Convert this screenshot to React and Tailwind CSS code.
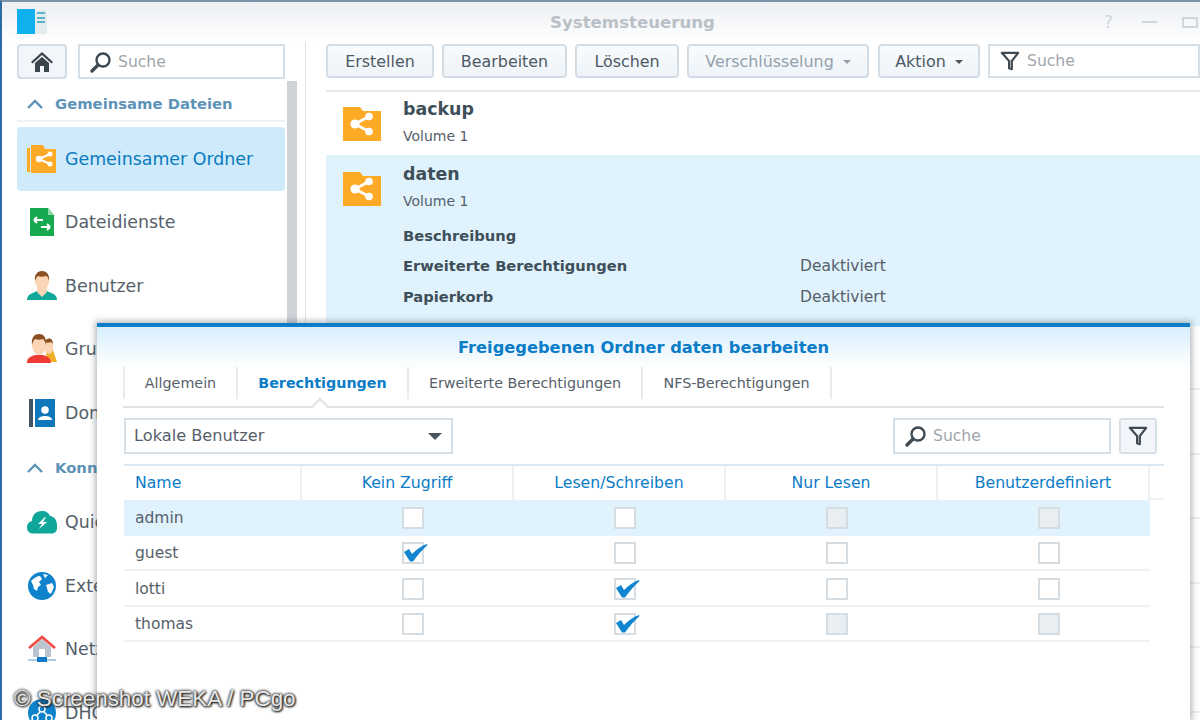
import React from 'react'

const FolderIcon = () => (
  <svg viewBox="0 0 38 36" className="w-[38px] h-[36px]">
    <path d="M0 2h17l3 4h18v30H0z" fill="#fdab27" />
    <g stroke="#fff" strokeWidth="2.6">
      <path d="M12 19l13-7M12 19l13 7" />
    </g>
    <circle cx="12" cy="19" r="4.6" fill="#fff" />
    <circle cx="26" cy="11.5" r="3.8" fill="#fff" />
    <circle cx="26" cy="26.5" r="3.8" fill="#fff" />
  </svg>
)

const SidebarFolder = () => (
  <svg viewBox="0 0 30 28" className="w-[30px] h-[28px]">
    <path d="M0 3h3v24H0z" fill="#fdab27" />
    <path d="M4 0h12l2 4h11v24H4z" fill="#fdab27" />
    <path d="M12 14l11-5M12 14l11 5" stroke="#fff" strokeWidth="2" />
    <circle cx="12" cy="14" r="3.2" fill="#fff" />
    <circle cx="23" cy="9" r="2.5" fill="#fff" />
    <circle cx="23" cy="19" r="2.5" fill="#fff" />
  </svg>
)

const FileServiceIcon = () => (
  <svg viewBox="0 0 26 28" className="w-[26px] h-[28px]">
    <path d="M1 0h18l6 7v21H1z" fill="#16a950" />
    <path d="M19 0v7h6z" fill="#8fd8a8" />
    <path d="M5 12h9M5 12l3-3M5 12l3 3M21 19h-9M21 19l-3-3M21 19l-3 3" stroke="#fff" strokeWidth="2" fill="none" />
  </svg>
)

const UserIcon = () => (
  <svg viewBox="0 0 30 30" className="w-[30px] h-[30px]">
    <path d="M0 29c0-6 6-7 10-9h10c4 2 10 3 10 9z" fill="#12a89a" />
    <path d="M10 15h10v6l-5 5-5-5z" fill="#fbd5b5" />
    <ellipse cx="15" cy="10" rx="7" ry="9" fill="#fbd5b5" />
    <path d="M8 10C7 3 11 0 15 0s8 3 7 10c-1-4-2-5-3-5-3 1-6 1-8 0-1 1-2 2-3 5z" fill="#8a4f22" />
  </svg>
)

const GroupIcon = () => (
  <svg viewBox="0 0 30 30" className="w-[30px] h-[30px]">
    <path d="M18 8c5-3 9 0 8 8l4 12H20z" fill="#f1b02a" />
    <ellipse cx="22" cy="13" rx="4" ry="7" fill="#fbd5b5" />
    <path d="M18 8c1-5 8-5 8 2l-2-2c-2 1-4 1-6 0z" fill="#8a4f22" />
    <path d="M0 29c0-6 5-7 8-8h8c3 1 8 2 8 8z" fill="#ee3b36" />
    <ellipse cx="12" cy="11" rx="7" ry="10" fill="#fbd5b5" />
    <path d="M5 11C4 3 8 0 12 0s8 3 7 11c-1-4-2-5-3-6-3 1-5 1-8 0-1 1-2 2-3 6z" fill="#8a4f22" />
  </svg>
)

const DomainIcon = () => (
  <svg viewBox="0 0 26 28" className="w-[26px] h-[28px]">
    <path d="M0 0h4v28H0z" fill="#3f5666" />
    <path d="M6 0h20v28H6z" fill="#0f78bd" />
    <circle cx="16" cy="11" r="3.8" fill="#fff" />
    <path d="M9 21c0-3 4-4 7-4s7 1 7 4z" fill="#fff" />
  </svg>
)

const CloudIcon = () => (
  <svg viewBox="0 0 30 24" className="w-[30px] h-[24px]">
    <path d="M6 23.500C2 23.500 0 21 0 17.500 0 14 2 11.500 5 11c0-6 4-10 10-10 4 0 7 2 8 5 4 .5 7 4 7 9v3c0 3-2 5.500-5 5.500z" fill="#10a79b" />
    <path d="M18 7l-7 7h4l-3 5 8-7h-4l3-5z" fill="#fff" />
  </svg>
)

const GlobeIcon = () => (
  <svg viewBox="0 0 28 28" className="w-[28px] h-[28px]">
    <circle cx="14" cy="14" r="14" fill="#0f82cc" />
    <path d="M3 9c3-3 6-5 9-5l2 3-3 3 2 3-3 2-1 4-3-2-1-4zM18 13l6-2 2 4-3 7-3-2-1-4zM15 2l5 1-3 3z" fill="#fff" />
  </svg>
)

const NetworkIcon = () => (
  <svg viewBox="0 0 28 28" className="w-[28px] h-[28px]">
    <path d="M5 12l9-8 9 8v10H5z" fill="#b9c4cf" />
    <path d="M1 13L14 2l13 11" stroke="#f04a43" strokeWidth="2.6" fill="none" />
    <path d="M11 14h6v8h-6z" fill="#fff" />
    <path d="M0 25h28" stroke="#8eb4d4" strokeWidth="1.4" />
    <path d="M9 22h10v5H9z" fill="#0f78c8" />
  </svg>
)

const DhcpIcon = () => (
  <svg viewBox="0 0 28 28" className="w-[28px] h-[28px]">
    <circle cx="14" cy="14" r="14" fill="#0f82cc" />
    <circle cx="14" cy="10" r="3" fill="none" stroke="#fff" strokeWidth="1.5" />
    <circle cx="7" cy="19" r="3" fill="none" stroke="#fff" strokeWidth="1.5" />
    <circle cx="21" cy="19" r="3" fill="none" stroke="#fff" strokeWidth="1.5" />
    <path d="M12 13l-3 3M16 13l3 3" stroke="#fff" strokeWidth="1.5" />
  </svg>
)

const Magnifier = () => (
  <svg viewBox="0 0 22 22" className="w-[22px] h-[22px]">
    <circle cx="13" cy="9" r="6.5" fill="none" stroke="#3f4a52" strokeWidth="2.4" />
    <path d="M8 14l-6 6" stroke="#3f4a52" strokeWidth="3.4" strokeLinecap="round" />
  </svg>
)

const Funnel = () => (
  <svg viewBox="0 0 22 22" className="w-[20px] h-[20px]">
    <path d="M2 2h18l-7 9v9l-3-1v-8z" fill="none" stroke="#3f4a52" strokeWidth="2.4" strokeLinejoin="round" />
  </svg>
)

const Caret = ({ tone = 'border-t-[#4a555e]', wide }) => (
  <span className={`inline-block w-0 h-0 border-x-transparent border-b-0 ${tone} ${wide ? 'border-x-[7px] border-t-[7px]' : 'border-x-[4px] border-t-[4px]'}`} />
)

const Check = () => (
  <svg viewBox="0 0 24 18" className="absolute left-0 top-0 w-[24px] h-[18px]">
    <path d="M0 8L5 5l3 5C12 6 17 2 23 0l.5 1C18 6 13 12 9 17.500L6 17.500z" fill="#0f86cf" />
  </svg>
)

const navTop = [
  { label: 'Gemeinsamer Ordner', icon: <SidebarFolder />, active: true },
  { label: 'Dateidienste', icon: <FileServiceIcon /> },
  { label: 'Benutzer', icon: <UserIcon /> },
  { label: 'Gruppe', icon: <GroupIcon /> },
  { label: 'Domain/LDAP', icon: <DomainIcon /> },
]

const navBottom = [
  { label: 'QuickConnect', icon: <CloudIcon /> },
  { label: 'Externer Zugriff', icon: <GlobeIcon /> },
  { label: 'Netzwerk', icon: <NetworkIcon /> },
  { label: 'DHCP-Server', icon: <DhcpIcon /> },
]

const NavItem = ({ item }) => (
  <div className={`flex items-center h-[63.5px] pl-[9px] gap-[7px] rounded-sm text-[17.4px] ${item.active ? 'bg-[#cfeafa] text-[#0a7bc0]' : 'text-[#56606a]'}`}>
    <span className="w-[32px] flex justify-center">{item.icon}</span>
    <span className="whitespace-nowrap">{item.label}</span>
  </div>
)

const SectionHead = ({ label }) => (
  <div className="flex items-center gap-[12px] pl-[10px] font-bold text-[14.8px] text-[#5e93b8]">
    <svg viewBox="0 0 16 10" className="w-[16px] h-[10px]">
      <path d="M1 9l7-7 7 7" fill="none" stroke="#5e93b8" strokeWidth="2.4" />
    </svg>
    <span className="whitespace-nowrap">{label}</span>
  </div>
)

const ToolButton = ({ children, width, dim }) => (
  <button className={`h-[34px] ${width} flex items-center justify-center gap-[9px] pt-[1px] rounded-[4px] border-2 border-[#d3dde5] bg-gradient-to-b from-[#f9fbfd] to-[#eef4f9] text-[15.9px] ${dim ? 'text-[#93a0ab]' : 'text-[#4d5963]'}`}>
    {children}
  </button>
)

const FolderRow = ({ name, open }) => (
  <div className={`flex pl-[17px] gap-[22px] ${open ? 'h-[64.5px] bg-[#e0f3fd]' : 'h-[63px]'}`}>
    <span className={open ? 'pt-[15px]' : 'pt-[13px]'}><FolderIcon /></span>
    <div className={open ? 'pt-[7px]' : 'pt-[5px]'}>
      <div className="font-bold text-[17.4px] leading-[24px] text-[#3f4f5a]">{name}</div>
      <div className="text-[14px] leading-[20px] mt-[5px] text-[#56606a]">Volume 1</div>
    </div>
  </div>
)

const tabs = ['Allgemein', 'Berechtigungen', 'Erweiterte Berechtigungen', 'NFS-Berechtigungen']
const tabWidths = ['w-[115px]', 'w-[171px]', 'w-[234px]', 'w-[189px]']

const columns = ['Kein Zugriff', 'Lesen/Schreiben', 'Nur Lesen', 'Benutzerdefiniert']

// n = leer, c = Haken, d = deaktiviert
const users = [
  { name: 'admin', boxes: ['n', 'n', 'd', 'd'], selected: true },
  { name: 'guest', boxes: ['c', 'n', 'n', 'n'] },
  { name: 'lotti', boxes: ['n', 'c', 'n', 'n'] },
  { name: 'thomas', boxes: ['n', 'c', 'd', 'd'] },
]

const Box = ({ kind }) => (
  <span className={`relative block w-[22px] h-[22px] border-2 border-[#d5dde3] ${kind === 'd' ? 'bg-[#e9eef2]' : 'bg-white'}`}>
    {kind === 'c' && <Check />}
  </span>
)

const Dialog = () => (
  <div className="absolute left-[95px] top-[321px] w-[1093px] h-[397px] bg-white border-t-4 border-[#0a7cc8] shadow-[0_0_6px_2px_rgba(70,80,90,0.4)] text-[#56606a]">
    <div className="h-[40px] pt-[2px] bg-gradient-to-b from-[#d6eefc] to-white flex items-center justify-center font-bold text-[16.25px] text-[#0a7cc8]">
      Freigegebenen Ordner daten bearbeiten
    </div>
    <div className="ml-[26px] w-[1041px] h-[41px] flex border-b-2 border-[#dfe2e5] pb-[7px]">
      {tabs.map((t, i) => (
        <div
          key={t}
          className={`relative ${tabWidths[i]} pt-[2px] flex items-center justify-center border-r-2 border-[#e8ebee] text-[14.3px] ${i === 0 ? 'border-l-2' : ''} ${i === 1 ? 'font-bold text-[#0a7cc8]' : ''}`}
        >
          {t}
          {i === 1 && (
            <span className="absolute left-[76px] bottom-[-13px] w-[12px] h-[12px] rotate-45 bg-white border-l-2 border-t-2 border-[#dfe2e5]" />
          )}
        </div>
      ))}
    </div>
    <div className="ml-[27px] mt-[10px] h-[36px] w-[1033px] flex items-center">
      <div className="w-[329px] h-full flex items-center justify-between pl-[8px] pr-[9px] border-2 border-[#d5dfe8] text-[16.2px]">
        <span className="pt-[1px]">Lokale Benutzer</span>
        <Caret wide />
      </div>
      <div className="ml-auto w-[218px] h-full flex items-center gap-[6px] pl-[10px] border-2 border-[#d5dfe8] text-[15.6px] text-[#a0a6ab]">
        <Magnifier />
        <span className="pt-[2px]">Suche</span>
      </div>
      <div className="ml-[8px] w-[38px] h-full flex items-center justify-center rounded-[3px] border-2 border-[#d5dfe8] bg-[#f2f6fa]">
        <Funnel />
      </div>
    </div>
    <div className="ml-[27px] mt-[10px] w-[1040px] border-t-2 border-[#dde9f2]">
      <div className="grid grid-cols-[178px_212px_212px_212px_212px_14px] h-[34px] text-[15.7px] text-[#0a7cc8]">
        <div className="flex items-center pl-[11px] border-r-2 border-[#eef0f2]">Name</div>
        {columns.map((c) => (
          <div key={c} className="flex items-center justify-center border-r-2 border-[#eef0f2]">{c}</div>
        ))}
        <div className="border-b-2 border-[#eef0f2]" />
      </div>
      {users.map((u) => (
        <div
          key={u.name}
          className={`grid grid-cols-[178px_212px_212px_212px_212px] h-[35.5px] w-[1026px] pt-[2px] items-center text-[15.5px] border-b-2 ${u.selected ? 'bg-[#e0f3fd] border-transparent' : 'border-[#f0f1f3]'}`}
        >
          <div className="pl-[11px] pt-[1px]">{u.name}</div>
          {u.boxes.map((b, i) => (
            <div key={i} className="flex justify-center pl-[10px]"><Box kind={b} /></div>
          ))}
        </div>
      ))}
    </div>
  </div>
)

export default function App() {
  return (
    <div className="relative w-[1200px] h-[720px] overflow-hidden bg-white border-t-2 border-[#7d93a8] border-l-2 border-l-[#2c6ba3] font-['DejaVu_Sans',sans-serif]">
      {/* Titelleiste */}
      <div className="h-[40px] bg-gradient-to-b from-[#eceff3] to-white flex items-center pl-[15px]">
        <svg viewBox="0 0 30 26" className="w-[30px] h-[26px] shrink-0">
          <path d="M0 0h18v25H0z" fill="#0fb0ee" />
          <path d="M18 1h12v24H18z" fill="#e4ebef" />
          <path d="M20 4h8M20 9h8M20 13h8" stroke="#5bb3c9" strokeWidth="2" />
        </svg>
        <div className="flex-1 text-center pl-[114px] pt-[2px] font-bold text-[16.6px] text-[#b9c0c7]">Systemsteuerung</div>
        <div className="w-[96px] flex items-center text-[#d2d6da]">
          <span className="text-[17px] leading-none">?</span>
          <span className="ml-[29px] w-[15px] h-[2px] bg-[#d2d6da]" />
          <span className="ml-[25px] w-[16px] h-[11px] border-2 border-[#d2d6da]" />
        </div>
      </div>

      <div className="flex h-[678px]">
        {/* Seitenleiste */}
        <div className="w-[304px] shrink-0 flex border-r border-[#dde0e3] pl-[15px]">
          <div className="w-[268px]">
            <div className="flex gap-[11px] h-[35px] mt-[2px]">
              <button className="w-[50px] h-[35px] flex items-center justify-center rounded-[4px] border-2 border-[#d3dde5] bg-[#f2f6fa]">
                <svg viewBox="0 0 22 22" className="w-[22px] h-[22px]">
                  <path d="M11 1L0 11l1.500 1.500L11 4l9.500 8.500L22 11z" fill="#3a444c" />
                  <path d="M4 12l7-6 7 6v9h-5v-6H9v6H4z" fill="#3a444c" />
                </svg>
              </button>
              <div className="flex-1 flex items-center gap-[6px] pl-[10px] border-2 border-[#d5dfe8] text-[15.6px] text-[#a0a6ab]">
                <Magnifier />
                <span className="pt-[2px]">Suche</span>
              </div>
            </div>
            <div className="mt-[14px] h-[29px] border-b-2 border-[#f0f1f3]">
              <SectionHead label="Gemeinsame Dateien" />
            </div>
            <div className="mt-[5px]">
              {navTop.map((item) => <NavItem key={item.label} item={item} />)}
            </div>
            <div className="mt-[12px] mb-[12px]">
              <SectionHead label="Konnektivität" />
            </div>
            {navBottom.map((item) => <NavItem key={item.label} item={item} />)}
          </div>
          <div className="ml-[2px] mt-[39px] w-[10px] bg-[#cfd3d8]" />
        </div>

        {/* Hauptbereich */}
        <div className="flex-1 pl-[20px] min-w-0">
          <div className="flex items-center h-[50px] border-b-2 border-[#e2e9ee] pb-[10px]">
            <div className="flex gap-[8px] w-full">
              <ToolButton width="w-[108px]">Erstellen</ToolButton>
              <ToolButton width="w-[125px]">Bearbeiten</ToolButton>
              <ToolButton width="w-[104px]">Löschen</ToolButton>
              <ToolButton width="w-[182px]" dim>Verschlüsselung <Caret tone="border-t-[#93a0ab]" /></ToolButton>
              <ToolButton width="w-[102px] ml-[1px]">Aktion <Caret /></ToolButton>
              <div className="flex-1 h-[34px] flex items-center gap-[7px] pl-[10px] border-2 border-[#d5dfe8] text-[15.6px] text-[#a0a6ab]">
                <Funnel />
                <span className="pt-[2px]">Suche</span>
              </div>
            </div>
          </div>
          <FolderRow name="backup" />
          <FolderRow name="daten" open />
          <div className="bg-[#e0f3fd] h-[107px] -mt-[1px] pt-[2px] pl-[77px] text-[14.7px] text-[#3f4f5a]">
            {[
              ['Beschreibung', ''],
              ['Erweiterte Berechtigungen', 'Deaktiviert'],
              ['Papierkorb', 'Deaktiviert'],
            ].map(([k, v]) => (
              <div key={k} className="flex items-center h-[30.5px]">
                <span className="w-[397px] font-bold">{k}</span>
                <span className="pt-[1px] text-[15.5px] text-[#56606a]">{v}</span>
              </div>
            ))}
          </div>
          {[0, 1, 2, 3, 4, 5].map((n) => (
            <div key={n} className="h-[64.5px] border-b-2 border-[#eceff2]" />
          ))}
        </div>
      </div>

      <Dialog />

      <div className="absolute left-[12px] top-[680px] whitespace-nowrap font-['Liberation_Sans',sans-serif] text-[22.4px] text-[#e8e8e8] [text-shadow:0_0_3px_#222,0_0_3px_#222,1px_1px_2px_#222]">
        © Screenshot WEKA / PCgo
      </div>
    </div>
  )
}
